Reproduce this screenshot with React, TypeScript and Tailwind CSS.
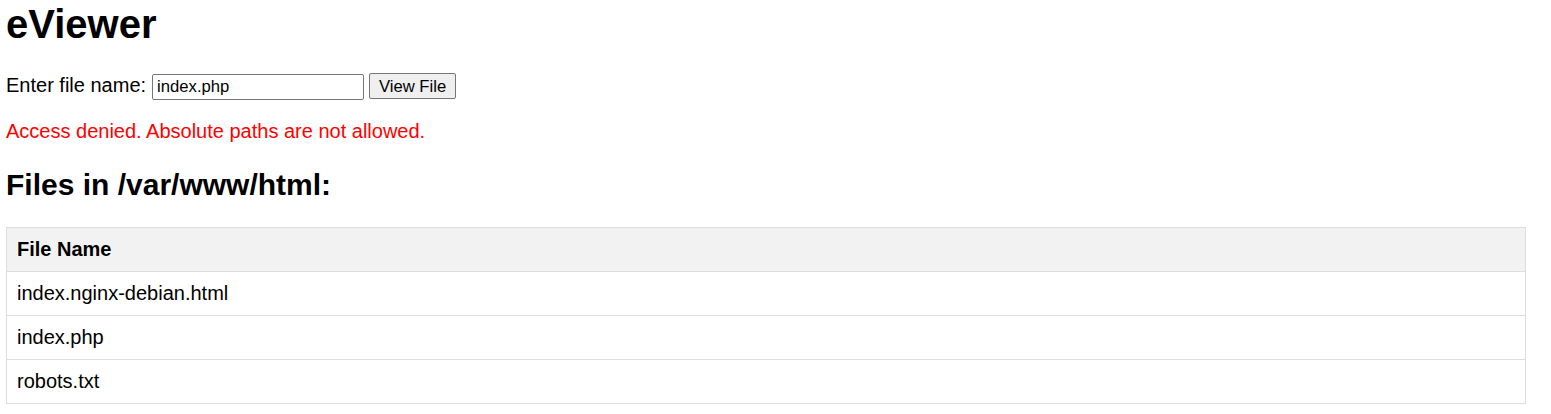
const files = ["index.nginx-debian.html", "index.php", "robots.txt"];

export default function App() {
  return (
    <div className="min-h-screen bg-white px-[6px] pt-[1px] text-black font-['Liberation_Sans',Arial,sans-serif]">
      <h1 className="text-[40px] font-bold leading-[46px]">eViewer</h1>

      <form className="mt-[26px] flex items-baseline text-[20px]" onSubmit={(e) => e.preventDefault()}>
        <label htmlFor="file" className="leading-[23px]">Enter file name:</label>
        <input
          id="file"
          defaultValue="index.php"
          className="ml-[6px] h-[26px] w-[212px] rounded-[2px] border border-[#767676] px-[4px] text-[16.67px] outline-none"
        />
        <button
          type="submit"
          className="ml-[5px] h-[26px] w-[87px] rounded-[2px] border border-[#767676] bg-[#efefef] text-[16.67px]"
        >
          View File
        </button>
      </form>

      <p className="mt-[20px] text-[20px] leading-[23px] text-[#ff0000]">
        Access denied. Absolute paths are not allowed.
      </p>

      <h2 className="mt-[25px] text-[30px] font-bold leading-[34px]">Files in /var/www/html:</h2>

      <table className="mt-[25px] w-[1520px] border-collapse text-[20px]">
        <thead>
          <tr className="bg-[#f2f2f2]">
            <th className="border border-[#dddddd] px-[10px] py-[10px] text-left font-bold leading-[23px]">File Name</th>
          </tr>
        </thead>
        <tbody>
          {files.map((f) => (
            <tr key={f}>
              <td className="border border-[#dddddd] px-[10px] py-[10px] leading-[23px]">{f}</td>
            </tr>
          ))}
        </tbody>
      </table>
    </div>
  );
}
